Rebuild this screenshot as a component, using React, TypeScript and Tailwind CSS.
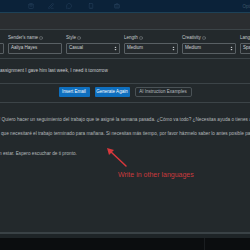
import React from 'react';
import { Info, ShoppingBag, PenLine, MessageCircle, Smartphone, Briefcase } from 'lucide-react';

const font = { fontFamily: '"Liberation Sans", Arial, sans-serif' };

const Arrows: React.FC = () => (
  <svg width="3" height="5" viewBox="0 0 6 10" className="shrink-0">
    <path d="M1 4 L3 1 L5 4 Z M1 6 L3 9 L5 6 Z" fill="#c9cdd0" />
  </svg>
);

const Field: React.FC<{ label: string; value: string; select?: boolean; className?: string }> = ({ label, value, select, className }) => (
  <div className={`flex flex-col gap-[3px] w-[54px] shrink-0 ${className ?? ''}`}>
    <div className="flex items-center gap-[1px] h-[5px] text-[4.5px] leading-[5px] text-[#c5c9cc] whitespace-nowrap">
      {label}
      <Info size={4} strokeWidth={2} className="text-[#9aa0a4]" />
    </div>
    <div className="flex items-center justify-between h-[11px] px-[2px] border border-[#596064] bg-[#252a2d] rounded-[1px] text-[4.5px] text-[#d0d4d6] whitespace-nowrap">
      <span>{value}</span>
      {select && <Arrows />}
    </div>
  </div>
);

const App: React.FC = () => {
  return (
    <div className="w-[250px] h-[250px] overflow-hidden flex flex-col bg-[#23292c] relative" style={font}>
      {/* top bar */}
      <div className="h-[13px] shrink-0 bg-[#0b2239] border-b border-[#1d4157] flex items-center text-[#2a4560]">
        <div className="flex items-center ml-[28px]">
          <ShoppingBag size={6} strokeWidth={2} />
          <PenLine size={6} strokeWidth={2} className="ml-[14px]" />
          <MessageCircle size={6} strokeWidth={2} className="ml-[12px]" />
          <Smartphone size={6} strokeWidth={2} className="ml-[16px]" />
          <Briefcase size={6} strokeWidth={2} className="ml-[20px]" />
        </div>
        <span className="ml-auto mr-[-8px] self-end mb-[1px] text-[4.5px] text-[#3e5568]">Options</span>
      </div>

      {/* sub header */}
      <div className="h-[17px] shrink-0 bg-[#2b2e31] border-b border-[#3c4448]" />

      {/* fields */}
      <div className="flex gap-[4px] pt-[5px] pb-[4px] shrink-0 border-b border-[#3c4448]">
        <Field label="" value="" className="ml-[-50px]" />
        <Field label="Sender's name" value="Aaliya Hayes" />
        <Field label="Style" value="Casual" select />
        <Field label="Length" value="Medium" select />
        <Field label="Creativity" value="Medium" select />
        <Field label="Language" value="Spanish" select />
      </div>

      {/* instruction */}
      <div className="h-[25px] shrink-0 border-b border-[#3c4448] flex items-center whitespace-nowrap text-[4.7px] text-[#c9cdd0]">
        assignment I gave him last week, I need it tomorrow
      </div>

      {/* buttons */}
      <div className="h-[19px] shrink-0 border-b border-[#3c4448] flex items-start pt-[3px] justify-center gap-[5px] text-[4.5px]">
        <button className="h-[10px] w-[31px] bg-[#0e6fbf] text-white rounded-[1px] whitespace-nowrap">Insert Email</button>
        <button className="h-[10px] w-[35px] bg-[#0e6fbf] text-white rounded-[1px] whitespace-nowrap">Generate Again</button>
        <button className="h-[10px] w-[57px] border border-[#4a5256] text-[#b9bec1] rounded-[2px] whitespace-nowrap">AI Instruction Examples</button>
      </div>

      {/* output */}
      <div className="flex-1 flex flex-col pt-[14px] text-[4.7px] leading-[6px] text-[#b4b9bc] whitespace-nowrap">
        <p className="ml-[-1px]">! Quiero hacer un seguimiento del trabajo que te asigné la semana pasada. ¿Cómo va todo? ¿Necesitas ayuda o tienes algún problema?</p>
        <p className="mt-[8px] ml-[1px]">que necesitaré el trabajo terminado para mañana. Si necesitas más tiempo, por favor házmelo saber lo antes posible para organizarnos.</p>
        <p className="mt-[14px] ml-[-1px]">n estar. Espero escuchar de ti pronto.</p>
      </div>

      {/* footer */}
      <div className="shrink-0 h-[2px] bg-[#3a4246]" />
      <div className="shrink-0 h-[4px] bg-[#1e2427]" />
      <div className="shrink-0 h-[12px] bg-[#0b0d0f] flex">
        <div className="w-[205px] border-r border-[#1a1d20]" />
      </div>

      {/* annotation */}
      <svg className="absolute left-[104px] top-[145px]" width="26" height="25" viewBox="0 0 26 25">
        <path d="M22 21 L5 5" stroke="#d8383c" strokeWidth="1.5" strokeLinecap="round" />
        <path d="M3 3 L10 5 L5 10 Z" fill="#d8383c" />
      </svg>
      <span className="absolute left-[118px] top-[170px] text-[7px] leading-[9px] text-[#c93a3d] whitespace-nowrap">Write in other languages</span>
    </div>
  );
};

export default App;
